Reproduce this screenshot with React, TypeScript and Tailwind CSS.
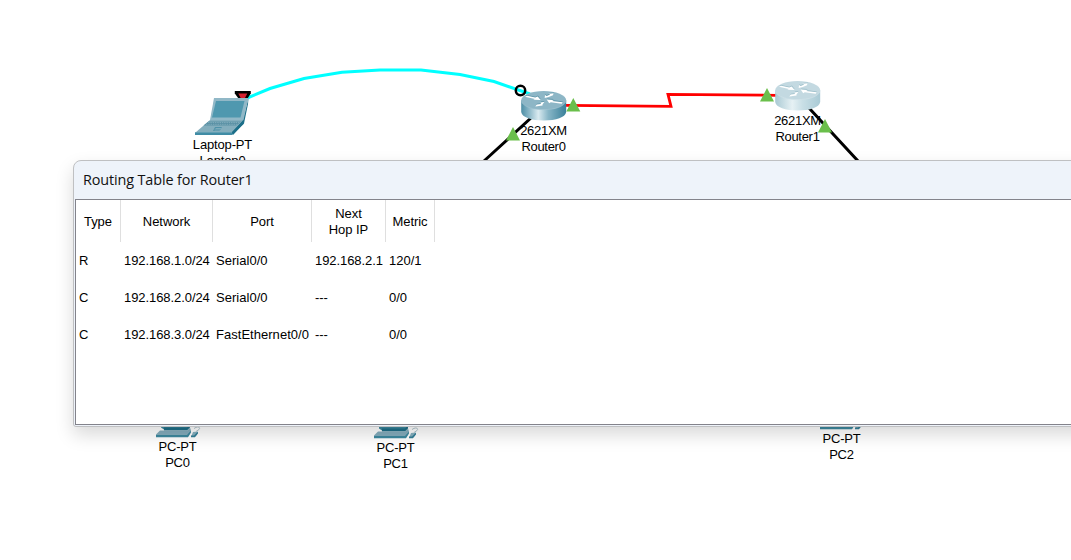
import React from "react";

type Label = { lines: string[]; left: string; top: string; tracking: string };

const labels: Label[] = [
  { lines: ["Laptop-PT", "Laptop0"], left: "left-[182.5px]", top: "top-[137px]", tracking: "tracking-[-0.15px]" },
  { lines: ["2621XM", "Router0"], left: "left-[503.5px]", top: "top-[123px]", tracking: "tracking-[-0.3px]" },
  { lines: ["2621XM", "Router1"], left: "left-[757.5px]", top: "top-[113px]", tracking: "tracking-[-0.3px]" },
  { lines: ["PC-PT", "PC0"], left: "left-[137.5px]", top: "top-[439px]", tracking: "tracking-[-0.2px]" },
  { lines: ["PC-PT", "PC1"], left: "left-[355.5px]", top: "top-[440px]", tracking: "tracking-[-0.2px]" },
  { lines: ["PC-PT", "PC2"], left: "left-[801.5px]", top: "top-[431px]", tracking: "tracking-[-0.2px]" },
];

const columns = [
  { title: "Type", width: "w-[45px]", tracking: "" },
  { title: "Network", width: "w-[92px]", tracking: "tracking-[-0.07px]" },
  { title: "Port", width: "w-[99px]", tracking: "tracking-[0.03px]" },
  { title: "Next\nHop IP", width: "w-[74px]", tracking: "tracking-[-0.07px]" },
  { title: "Metric", width: "w-[49px]", tracking: "" },
];

const routes = [
  ["R", "192.168.1.0/24", "Serial0/0", "192.168.2.1", "120/1"],
  ["C", "192.168.2.0/24", "Serial0/0", "---", "0/0"],
  ["C", "192.168.3.0/24", "FastEthernet0/0", "---", "0/0"],
];

const arrows =
  "M3.800 5.700 6 4.800 14 6.600 16.500 5.400 19.500 9 12 8.800 13.600 7.900Z M23.500 7 23.800 4 25.500 4.900 29 3.400 27.200 2.800 32.500 2.200 31.800 4.300 27.500 6Z M25.500 8.400 32.500 8.900 31 9.900 41.500 11.300 40.500 12.700 29.600 11.200 28 12.200Z M19.500 11.400 23.300 10.800 21.500 13.200 21.300 14.600 14 15.400 15.500 13.600 19.600 13Z";

function Router({ x, y, faded }: { x: number; y: number; faded?: boolean }) {
  const id = faded ? "bodyFaded" : "body";
  return (
    <g transform={`translate(${x} ${y})`}>
      <defs>
        <linearGradient id={id} x1="0" x2="1" y1="0" y2="0">
          <stop offset="0" stopColor={faded ? "#a9c8d3" : "#4d8ea5"} />
          <stop offset="0.12" stopColor={faded ? "#bdd6de" : "#76aabd"} />
          <stop offset="0.38" stopColor={faded ? "#e6f1f4" : "#d9eaf0"} />
          <stop offset="0.6" stopColor={faded ? "#c9dfe6" : "#88b6c7"} />
          <stop offset="1" stopColor={faded ? "#a9cad5" : "#3a809a"} />
        </linearGradient>
      </defs>
      <path d="M0 9.5V21C1 26.500 10 29.500 22.500 29.500S44 26.500 45 21V9.500Z" fill={`url(#${id})`} />
      <ellipse cx="22.500" cy="9.300" rx="22.500" ry="9.300" fill={faded ? "#c3d9e1" : "#8db6c6"} />
      <path d="M0.300 10.500C2 15.500 11 18.600 22.500 18.600S43 15.500 44.700 10.500" fill="none" stroke={faded ? "#d2e3e9" : "#a2c4d1"} strokeWidth="0.600" />
      <path d={arrows} fill={faded ? "#9dbfca" : "#5c94a8"} transform="translate(0.200 -0.800)" />
      <path d={arrows} fill="#fff" />
    </g>
  );
}

function Laptop() {
  return (
    <g>
      <path d="M234.800 91H250.800V93.500L247.500 98.500H238.500L234.800 93.500Z" fill="#000" />
      <path d="M238.300 93.500H247.300L245 98H240.700Z" fill="#d5202f" />
      <path d="M248.500 98 248 104 244 123.500 232 134.500V130L243 119Z" fill="#1e7089" />
      <path d="M214 98H248.500L243.500 120H210Z" fill="#91b8c7" />
      <path d="M216 101H244.500L240.500 117.500H212Z" fill="#4f98af" />
      <path d="M210 120H243.500L232 132.500H195.500Z" fill="#84aebd" />
      <path d="M208.500 121.500H241L236.500 125.500H203.500Z" fill="#5a91a5" />
      <path d="M208 122.500H239.500M206 124.300H238" stroke="#8db5c3" strokeWidth="0.700" strokeDasharray="1.500 0.800" />
      <path d="M215 127H222L219.500 131H213Z" fill="#4f92a8" />
      <path d="M215.500 128.500H221M214.500 130H220" stroke="#8fb7c5" strokeWidth="0.700" />
      <path d="M195 132.300H232.500V135H195Z" fill="#408ca5" />
      <path d="M232 132 243.500 120V124L233 135Z" fill="#1c6f89" />
    </g>
  );
}

function Pc({ x, y }: { x: number; y: number }) {
  return (
    <g transform={`translate(${x} ${y})`}>
      <path d="M5-4H33L35-2 31 3H8L5 1Z" fill="#3d899f" />
      <path d="M8 1H31L34-2V1L31 4H8Z" fill="#1f6f88" />
      <path d="M4 4H31L34 1 35 4 32 10H0V8Z" fill="#84adbd" />
      <path d="M0 8.500H31L35 4V6L32 10.700H0Z" fill="#3d899f" />
      <path d="M37 5.500 41.500 5 41 8 39 10.500H35Z" fill="#86b1c0" />
      <path d="M39 10.500 42 7V5L38 9H35V10.700H39Z" fill="#347f97" />
      <path d="M38 2C42-1 45 1 43 3L40 5" fill="none" stroke="#b0c5cd" strokeWidth="1" />
    </g>
  );
}

function Topology() {
  return (
    <svg className="absolute inset-0" width="1071" height="560" viewBox="0 0 1071 560">
      <path d="M246 98.500 270 88.500 304 78.500 342 72.300 380 70H421L460 74.500 494 81.500 530 94" fill="none" stroke="#00ffff" strokeWidth="3" />
      <path d="M566 105.300 671 106.300 668 94.300 777 95.300" fill="none" stroke="#ff0000" strokeWidth="2.800" />
      <path d="M544 106 484 161M797 95 858 161" stroke="#000" strokeWidth="3" />
      <Laptop />
      <Router x={521.2} y={91} />
      <Router x={775.2} y={81} faded />
      <circle cx="520.500" cy="90.500" r="4.700" fill="none" stroke="#000" strokeWidth="2.500" />
    </svg>
  );
}

function LinkLights() {
  return (
    <svg className="absolute inset-0" width="1071" height="560" viewBox="0 0 1071 560">
      <path d="M573.300 98 580.300 111.500H566.300ZM513 127 520 140.500H506ZM767 88 774 101.500H760ZM825 119 832 132.500H818Z" fill="#6abf4b" />
      <Pc x={156} y={426.5} />
      <Pc x={374} y={427.5} />
      <Pc x={820} y={418.5} />
    </svg>
  );
}

export default function App() {
  return (
    <div className="relative h-[560px] w-[1071px] overflow-hidden bg-white font-['Liberation_Sans',Arial,sans-serif] text-[13px] leading-4 text-black">
      <Topology />
      <LinkLights />
      {labels.map((l) => (
        <div key={l.lines.join()} className={`absolute w-20 text-center ${l.left} ${l.top} ${l.tracking}`}>
          {l.lines.map((t) => (
            <div key={t}>{t}</div>
          ))}
        </div>
      ))}

      <section className="absolute top-[160px] left-[73px] flex h-[267px] w-[1040px] flex-col rounded-lg rounded-b-[3px] border border-[#bfc0c2] bg-[#eef3fa] pl-px shadow-[0_8px_18px_rgba(0,0,0,0.15)]">
        <h1 className="h-[38px] shrink-0 pt-[8px] pl-2 font-['Open_Sans','Noto_Sans',sans-serif] text-[14.400px] leading-[22px] tracking-[-0.12px] text-[#111111]">
          Routing Table for Router1
        </h1>
        <div className="h-[226px] shrink-0 border border-[#83838b] bg-white">
          <div className="flex h-[42px]">
            {columns.map((c) => (
              <div key={c.title} className={`flex shrink-0 items-center justify-center border-r border-[#dfdfdf] pt-[2px] text-center tracking-[-0.05px] whitespace-pre ${c.width}`}>
                {c.title}
              </div>
            ))}
          </div>
          {routes.map((r) => (
            <div key={r[1]} className="flex h-[37px] items-center">
              {r.map((v, i) => (
                <div key={i} className={`shrink-0 pl-[3px] whitespace-nowrap ${columns[i].width} ${columns[i].tracking}`}>
                  {v}
                </div>
              ))}
            </div>
          ))}
        </div>
      </section>
    </div>
  );
}
